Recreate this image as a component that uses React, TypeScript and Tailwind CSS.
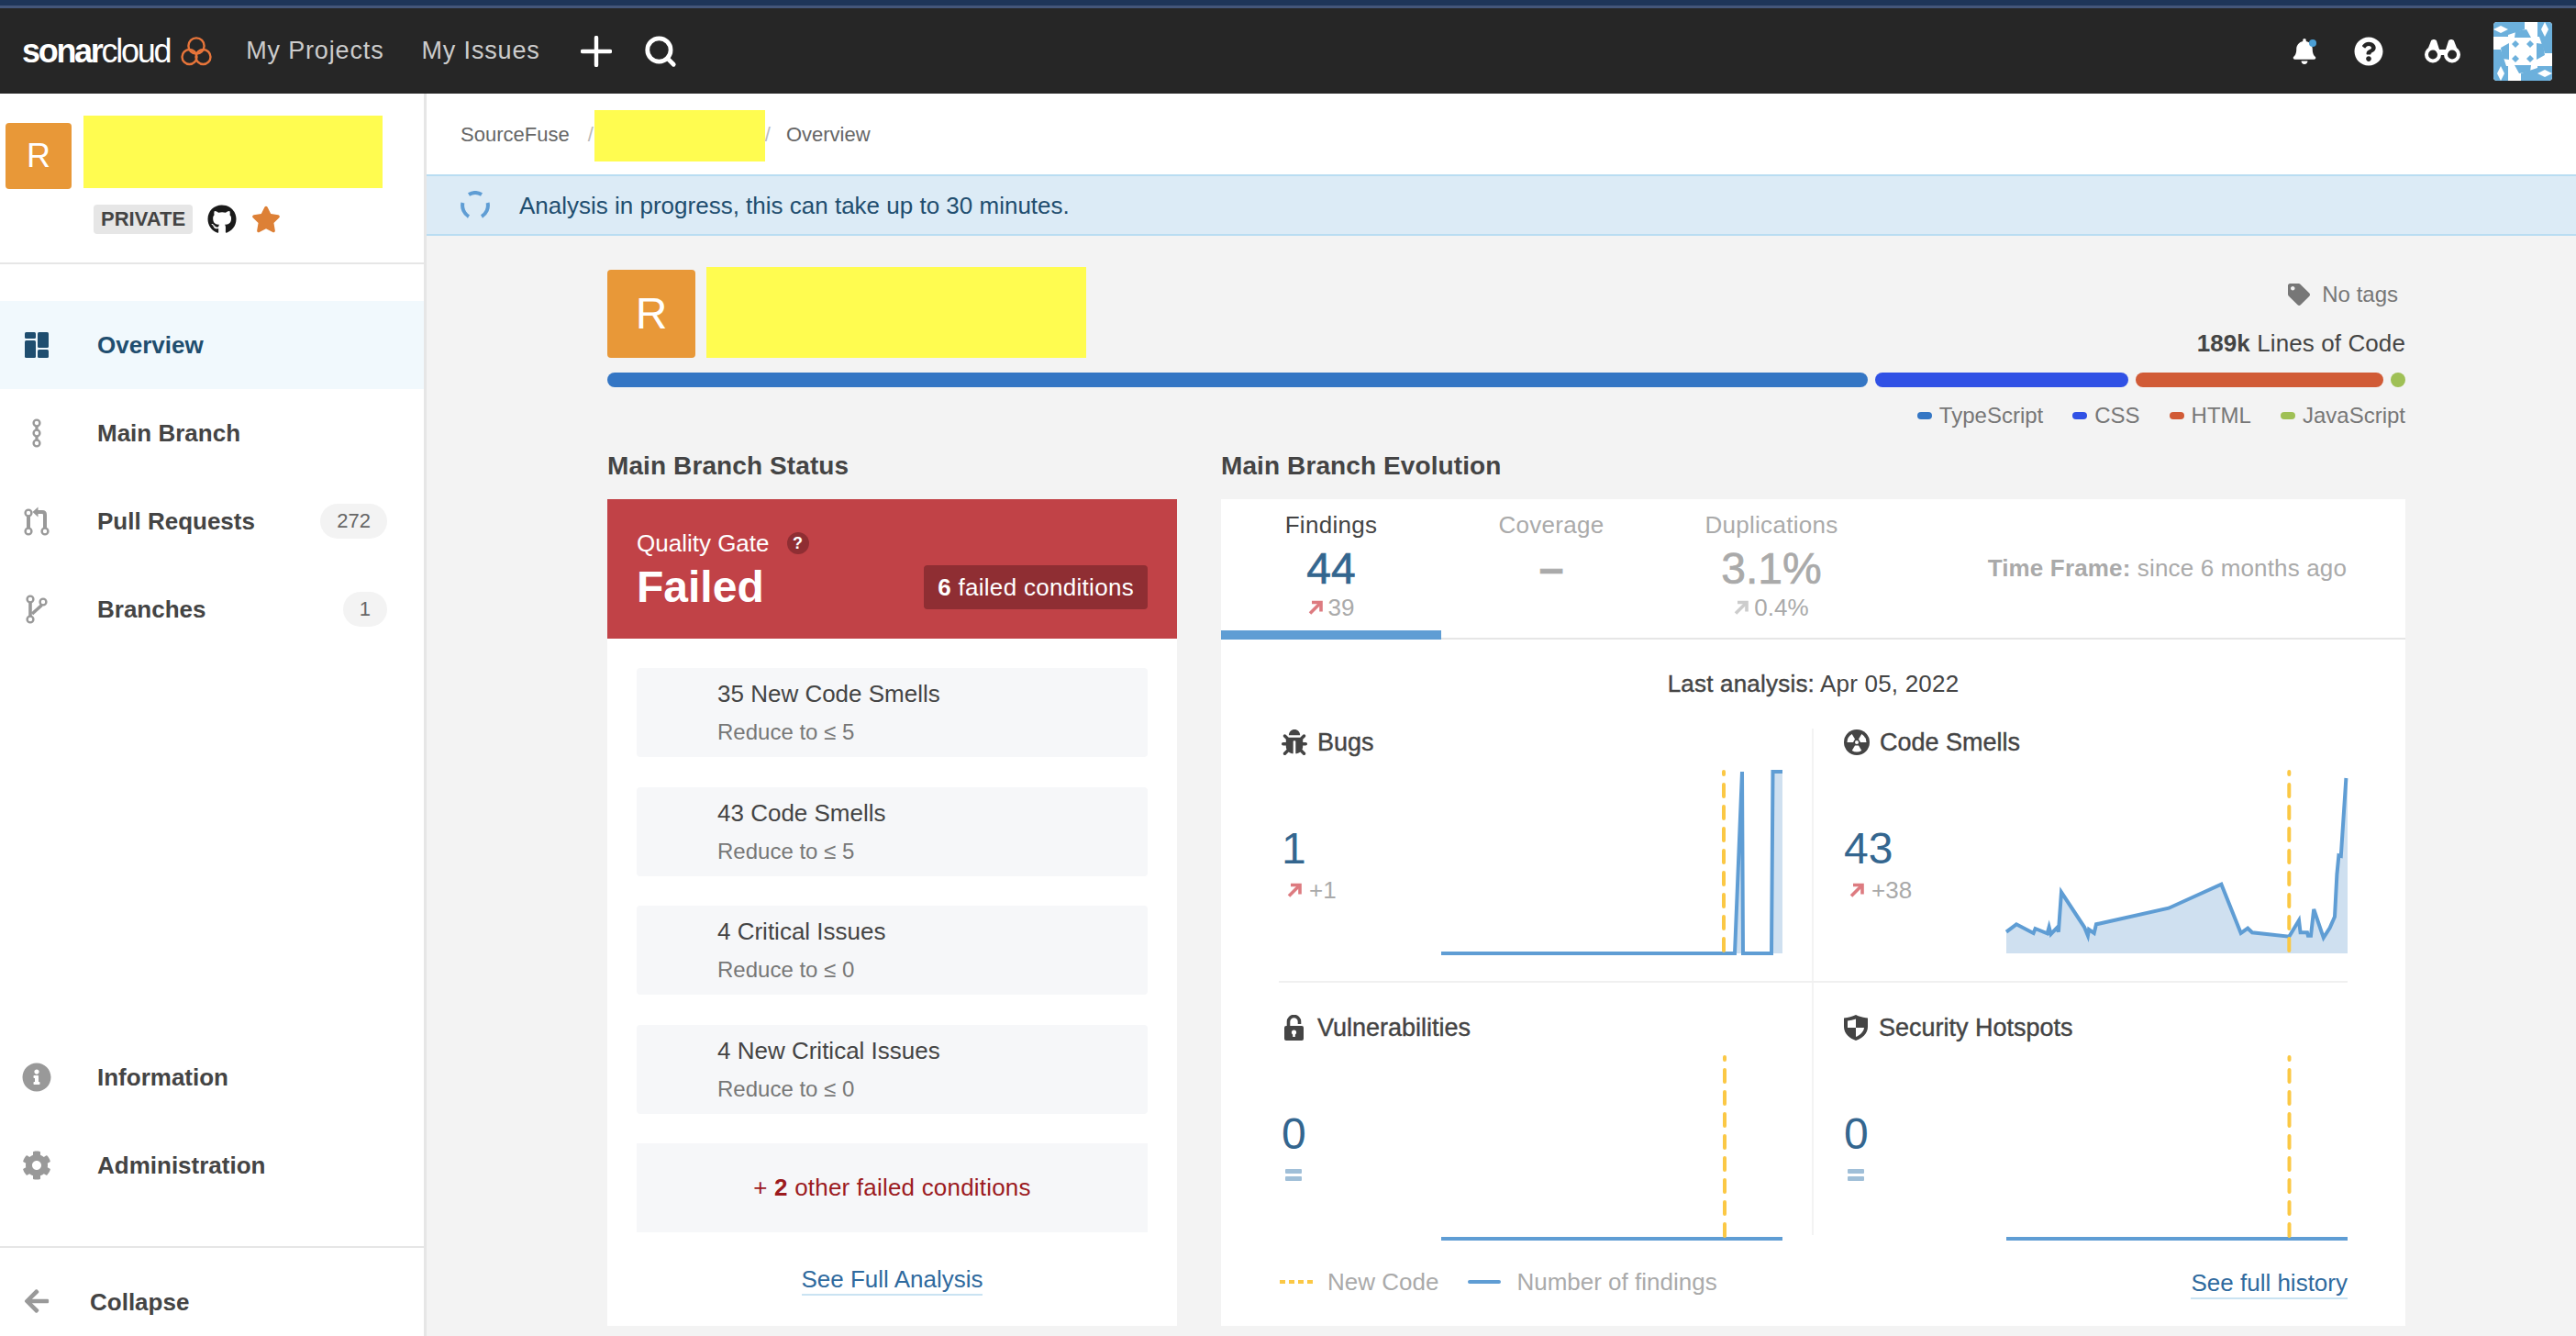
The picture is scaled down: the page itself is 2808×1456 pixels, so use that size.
import { Search } from "lucide-react";
import {
  FaArrowLeft,
  FaBell,
  FaBug,
  FaCog,
  FaGithub,
  FaInfoCircle,
  FaQuestionCircle,
  FaStar,
  FaTag,
} from "react-icons/fa";

const conditions = [
  { title: "35 New Code Smells", sub: "Reduce to ≤ 5" },
  { title: "43 Code Smells", sub: "Reduce to ≤ 5" },
  { title: "4 Critical Issues", sub: "Reduce to ≤ 0" },
  { title: "4 New Critical Issues", sub: "Reduce to ≤ 0" },
];

const smellsLine =
  "0,176.7 11,168.3 29.6,178 31.6,173 44.7,178.3 46.6,171.3 48.6,179 55.3,172 56.9,176.7 60,133.3 85,171.3 88.9,180.7 90,174 95.7,178 98,168.3 177,150.7 234.4,124.7 255.7,178 263.2,172.7 268,177.3 308.3,181.7 319,164 320.6,177.3 328,177.3 328.9,180.7 332,180.7 335.2,152 345.8,183 352.6,172.3 358,160 360.4,114 362.4,93.3 364.8,94 370.4,9";

function DashboardIcon() {
  return (
    <svg width="26" height="28" viewBox="0 0 26 28" fill="#1f4e6f">
      <rect x="0" y="0" width="12" height="7" rx="1.5" />
      <rect x="0" y="9" width="12" height="19" rx="1.5" />
      <rect x="14" y="0" width="12" height="17" rx="1.5" />
      <rect x="14" y="19" width="12" height="9" rx="1.5" />
    </svg>
  );
}

function MainBranchIcon() {
  return (
    <svg width="12" height="32" viewBox="0 0 12 32" fill="none" stroke="#999" strokeWidth="2.4">
      <circle cx="6" cy="5" r="3.4" />
      <circle cx="6" cy="16" r="3.4" />
      <circle cx="6" cy="27" r="3.4" />
      <path d="M6 8.5v4M6 19.5v4" strokeWidth="3.2" />
    </svg>
  );
}

function PullRequestIcon() {
  return (
    <svg width="28" height="32" viewBox="0 0 28 32" fill="none" stroke="#999" strokeWidth="2.4">
      <circle cx="5" cy="7" r="3.4" />
      <circle cx="5" cy="27" r="3.4" />
      <circle cx="23" cy="27" r="3.4" />
      <path d="M5 10.5v13" strokeWidth="4" />
      <path d="M23 23.5V9c0-2-1-3-3-3h-5" strokeWidth="4" />
      <path d="M15.5 0.5v11L9.5 6z" fill="#999" stroke="none" />
    </svg>
  );
}

function BranchIcon() {
  return (
    <svg width="24" height="32" viewBox="0 0 24 32" fill="none" stroke="#999" strokeWidth="2.4">
      <circle cx="5" cy="5" r="3.4" />
      <circle cx="5" cy="27" r="3.4" />
      <circle cx="19" cy="8" r="3.4" />
      <path d="M5 8.5v15" strokeWidth="3.6" />
      <path d="M17.5 11.5L7 21" strokeWidth="3.6" />
    </svg>
  );
}

function BinocularsIcon() {
  return (
    <svg width="39" height="27" viewBox="0 0 39 27" fill="none">
      <circle cx="9" cy="17.5" r="7" stroke="#fff" strokeWidth="4" />
      <circle cx="30" cy="17.5" r="7" stroke="#fff" strokeWidth="4" />
      <path d="M2.5 14L7 2.5C8 0.5 12 0.5 13 2.5L16 12H23L26 2.5C27 0.5 31 0.5 32 2.5L36.5 14L28 11L24 18H15L11 11Z" fill="#fff" />
    </svg>
  );
}

function SmellIcon() {
  const sector = (a: number) => {
    const r = (d: number) => (d * Math.PI) / 180;
    const x = (rad: number, d: number) => (14 + rad * Math.cos(r(d))).toFixed(2);
    const y = (rad: number, d: number) => (14 - rad * Math.sin(r(d))).toFixed(2);
    return `M${x(4, a - 30)} ${y(4, a - 30)}L${x(10.5, a - 30)} ${y(10.5, a - 30)}A10.5 10.5 0 0 0 ${x(10.5, a + 30)} ${y(10.5, a + 30)}L${x(4, a + 30)} ${y(4, a + 30)}Z`;
  };
  return (
    <svg width="28" height="28" viewBox="0 0 28 28">
      <circle cx="14" cy="14" r="14" fill="#444" />
      <path d={sector(30)} fill="#fff" />
      <path d={sector(150)} fill="#fff" />
      <path d={sector(270)} fill="#fff" />
      <circle cx="14" cy="14" r="2" fill="#fff" />
    </svg>
  );
}

function LockIcon() {
  return (
    <svg width="21" height="28" viewBox="0 0 21 28">
      <path d="M4.5 14V7.5a6 6 0 0 1 12 0V10" fill="none" stroke="#444" strokeWidth="3.6" />
      <rect x="0" y="12" width="21" height="16" rx="2" fill="#444" />
      <circle cx="10.5" cy="19" r="2.6" fill="#fff" />
      <rect x="9.2" y="19" width="2.6" height="5" fill="#fff" />
    </svg>
  );
}

function ShieldIcon() {
  return (
    <svg width="26" height="28" viewBox="0 0 26 28">
      <path d="M13 0C17 2 21 3 26 3.5V13C26 21 19 26 13 28C7 26 0 21 0 13V3.5C5 3 9 2 13 0Z" fill="#444" />
      <path d="M13 4.5V14H4V6.5C7 6.2 10 5.6 13 4.5Z" fill="#fff" />
      <path d="M13 14H22C21.5 18.5 17.5 22 13 24Z" fill="#fff" />
    </svg>
  );
}

function AvatarPiece() {
  return (
    <g>
      <polygon points="0,0 16,0 16,16 0,16" fill="#6cb0dc" />
      <polygon points="16,0 34,0 34,8 16,14" fill="#6cb0dc" />
      <polygon points="0,8 8,4 16,8 8,12" fill="#fff" />
      <polygon points="24,10 36,8 41,17 23,17" fill="#6cb0dc" />
      <polygon points="24,20 28,24 24,28 20,24" fill="#6cb0dc" />
    </g>
  );
}

function Avatar() {
  return (
    <svg width="64" height="64" viewBox="0 0 64 64" className="rounded-[4px]">
      <rect width="64" height="64" fill="#fff" />
      <AvatarPiece />
      <g transform="rotate(90 32 32)"><AvatarPiece /></g>
      <g transform="rotate(180 32 32)"><AvatarPiece /></g>
      <g transform="rotate(270 32 32)"><AvatarPiece /></g>
    </svg>
  );
}

function DeltaArrow({ color }: { color: string }) {
  return (
    <svg width="16" height="16" viewBox="0 0 16 16" fill="none" stroke={color} strokeWidth="3.6">
      <path d="M2 14.5L12.5 4" />
      <path d="M4 2.5h10v10" />
    </svg>
  );
}

function Chart({ line, area, marker }: { line: string; area?: string; marker: number }) {
  return (
    <svg width="372" height="202" viewBox="0 0 372 202" className="overflow-visible shrink-0">
      {area && <polygon points={area} fill="#cfe0f0" />}
      <polyline points={line} fill="none" stroke="#5f9dd4" strokeWidth="4" />
      <line
        x1={marker}
        x2={marker}
        y1="2"
        y2="198"
        stroke="#fbc845"
        strokeWidth="4"
        strokeLinecap="round"
        strokeDasharray="13 11"
        strokeDashoffset="10"
      />
    </svg>
  );
}

function ChartCell({
  icon,
  title,
  value,
  delta,
  children,
  className,
  titleGap,
}: {
  icon: React.ReactNode;
  title: string;
  value: string;
  delta?: string;
  children: React.ReactNode;
  className: string;
  titleGap: string;
}) {
  return (
    <div className={className}>
      <div className="flex items-center h-[28px] text-[27px] text-[#444] [-webkit-text-stroke:0.4px_#444]">
        <span className={`flex justify-start ${titleGap}`}>{icon}</span>
        {title}
      </div>
      <div className="flex justify-between mt-4">
        <div className="pt-[62px]">
          <div className="text-[48px] leading-[48px] text-[#34668f]">{value}</div>
          {delta ? (
            <div className="flex items-center mt-2 ml-[6px] text-[26px] leading-[26px] text-[#aaa]">
              <DeltaArrow color="#dd7b80" />
              <span className="ml-2">{delta}</span>
            </div>
          ) : (
            <div className="mt-[14px] ml-1 flex flex-col gap-[3px] w-[18px]">
              <div className="h-[5px] rounded-[1px] bg-[#a0bfd8]" />
              <div className="h-[5px] rounded-[1px] bg-[#a0bfd8]" />
            </div>
          )}
        </div>
        {children}
      </div>
    </div>
  );
}

function NavItem({
  icon,
  label,
  badge,
  active,
}: {
  icon: React.ReactNode;
  label: string;
  badge?: string;
  active?: boolean;
}) {
  return (
    <div className={`flex items-center h-[96px] pr-10 ${active ? "bg-[#f1f9fd]" : ""}`}>
      <span className="w-[80px] flex justify-center shrink-0">{icon}</span>
      <span className={`ml-[26px] flex-1 text-[26px] font-bold ${active ? "text-[#1f4e6f]" : "text-[#444]"}`}>{label}</span>
      {badge && (
        <span className="h-[38px] px-[18px] min-w-[48px] rounded-full bg-[#f3f3f3] text-[22px] leading-[38px] text-center text-[#666]">
          {badge}
        </span>
      )}
    </div>
  );
}

function Tab({
  label,
  value,
  delta,
  active,
}: {
  label: string;
  value: React.ReactNode;
  delta?: string;
  active?: boolean;
}) {
  return (
    <div className={`w-[240px] h-[153px] pt-3 flex flex-col items-center ${active ? "border-b-[10px] border-[#5f9dd4]" : ""}`}>
      <div className={`text-[26px] leading-[32px] tracking-[0.3px] ${active ? "text-[#444]" : "text-[#aaa]"}`}>{label}</div>
      <div
        className={`mt-2 text-[48px] leading-[48px] ${
          active
            ? "text-[#34668f] [-webkit-text-stroke:0.7px_#34668f]"
            : "text-[#aaa] [-webkit-text-stroke:0.7px_#aaa]"
        }`}
      >
        {value}
      </div>
      {delta && (
        <div className="mt-1 flex items-center h-[28px] text-[26px] text-[#aaa]">
          <DeltaArrow color={active ? "#dd7b80" : "#ccc"} />
          <span className="ml-[6px]">{delta}</span>
        </div>
      )}
    </div>
  );
}

export default function App() {
  return (
    <div className="w-[2808px] h-[1456px] overflow-hidden flex flex-col bg-[#f3f3f3] font-['Liberation_Sans',Arial,sans-serif]">
      <div className="h-[6px] bg-[#1e3559]" />
      <div className="h-[3px] bg-[#44567a]" />

      {/* top bar */}
      <header className="h-[93px] bg-[#262626] flex items-center text-[#ccc] shrink-0">
        <div className="ml-6 flex items-center">
          <span className="text-[36px] tracking-[-2.3px] text-white">
            <b>sonar</b>cloud
          </span>
          <svg width="34" height="32" viewBox="0 0 34 32" fill="none" stroke="#e8753a" strokeWidth="2.4" className="ml-[12px]">
            <circle cx="17" cy="10" r="8.6" />
            <circle cx="9.5" cy="22" r="8" />
            <circle cx="24.5" cy="22" r="8" />
          </svg>
        </div>
        <span className="ml-[37px] text-[27px] tracking-[0.85px]">My Projects</span>
        <span className="ml-[41px] text-[27px] tracking-[0.85px]">My Issues</span>
        <svg width="34" height="34" viewBox="0 0 34 34" stroke="#fff" strokeWidth="4.4" strokeLinecap="round" className="ml-[44px]">
          <path d="M17 2v30M2 17h30" />
        </svg>
        <Search size={38} strokeWidth={3} color="#fff" className="ml-[34px]" />
        <div className="ml-auto flex items-center mr-[26px]">
          <span className="relative">
            <FaBell size={28} color="#fff" />
            <span className="absolute right-[1px] top-[1px] w-[8px] h-[8px] rounded-full bg-[#4b9fd5]" />
          </span>
          <FaQuestionCircle size={32} color="#fff" className="ml-[40px]" />
          <span className="ml-[45px]">
            <BinocularsIcon />
          </span>
          <span className="ml-[36px]">
            <Avatar />
          </span>
        </div>
      </header>

      <div className="flex flex-1 min-h-0">
        {/* sidebar */}
        <aside className="w-[465px] shrink-0 bg-white border-r-[3px] border-[#e6e6e6] flex flex-col">
          <div className="h-[186px] border-b-2 border-[#e6e6e6] pt-6">
            <div className="flex items-start pl-[6px]">
              <div className="w-[72px] h-[72px] mt-2 rounded-[4px] bg-[#e89838] text-white text-[36px] leading-[72px] text-center">R</div>
              <div className="w-[326px] h-[79px] ml-[13px] bg-[#fffc50]" />
            </div>
            <div className="flex items-center mt-[17px] ml-[102px]">
              <span className="h-[32px] px-2 rounded-[4px] bg-[#e6e6e6] text-[22px] leading-[32px] font-bold text-[#444]">PRIVATE</span>
              <FaGithub size={32} color="#1a1a1a" className="ml-4" />
              <FaStar size={32} color="#dd8036" className="ml-4" />
            </div>
          </div>
          <nav className="mt-10">
            <NavItem icon={<DashboardIcon />} label="Overview" active />
            <NavItem icon={<MainBranchIcon />} label="Main Branch" />
            <NavItem icon={<PullRequestIcon />} label="Pull Requests" badge="272" />
            <NavItem icon={<BranchIcon />} label="Branches" badge="1" />
          </nav>
          <div className="mt-auto">
            <NavItem icon={<FaInfoCircle size={32} color="#999" />} label="Information" />
            <NavItem icon={<FaCog size={32} color="#999" />} label="Administration" />
            <div className="mt-10 border-t-2 border-[#e6e6e6] h-[98px] pt-[43px] flex items-start">
              <span className="w-[80px] flex justify-center">
                <FaArrowLeft size={30} color="#999" />
              </span>
              <span className="ml-[18px] text-[26px] leading-[32px] font-bold text-[#444]">Collapse</span>
            </div>
          </div>
        </aside>

        <main className="flex-1 min-w-0 flex flex-col">
          {/* breadcrumb */}
          <div className="h-[88px] bg-white flex items-center pl-[37px] text-[22px] text-[#666] shrink-0">
            <span>SourceFuse</span>
            <span className="ml-[20px] text-[#bbb]">/</span>
            <div className="w-[186px] h-[56px] ml-[1px] mt-1 bg-[#fffc50]" />
            <span className="text-[#bbb]">/</span>
            <span className="ml-[17px]">Overview</span>
          </div>

          {/* analysis banner */}
          <div className="h-[67px] shrink-0 bg-[#dcebf6] border-y-2 border-[#b9ddf2] flex items-center pl-[37px]">
            <svg width="32" height="32" viewBox="0 0 32 32" fill="none" stroke="#5f9dd4" strokeWidth="4">
              <path d="M9 4a14 14 0 0 1 14 0" />
              <path d="M2.4 13a14 14 0 0 0 6.6 15" />
              <path d="M29.6 13a14 14 0 0 1-6.6 15" />
            </svg>
            <span className="ml-8 mt-px text-[26px] text-[#1f4e6f]">Analysis in progress, this can take up to 30 minutes.</span>
          </div>

          <div className="ml-[197px] w-[1960px] pt-[34px]">
            {/* project header */}
            <div className="flex justify-between h-[99px]">
              <div className="flex items-start">
                <div className="w-[96px] h-[96px] mt-[3px] rounded-[4px] bg-[#e89838] text-white text-[48px] leading-[96px] text-center">R</div>
                <div className="w-[414px] h-[99px] ml-3 bg-[#fffc50]" />
              </div>
              <div className="flex flex-col items-end pt-4">
                <div className="flex items-center h-[28px] pr-2 text-[24px] text-[#777]">
                  <FaTag size={24} color="#777" />
                  <span className="ml-[13px]">No tags</span>
                </div>
                <div className="mt-[23px] text-[26px] leading-[32px] tracking-[0.1px] text-[#444]">
                  <b>189k</b> Lines of Code
                </div>
              </div>
            </div>

            {/* languages */}
            <div className="mt-4 flex gap-2 h-[16px]">
              <div className="flex-1 rounded-full bg-[#3476c4]" />
              <div className="w-[276px] rounded-full bg-[#3051e5]" />
              <div className="w-[270px] rounded-full bg-[#d15b36]" />
              <div className="w-[16px] rounded-full bg-[#9fc055]" />
            </div>
            <div className="mt-[17px] flex justify-end gap-[32px] h-[28px] text-[24px] leading-[28px] text-[#777]">
              <span className="flex items-center"><i className="w-4 h-[8px] rounded-full bg-[#3476c4] mr-2" />TypeScript</span>
              <span className="flex items-center"><i className="w-4 h-[8px] rounded-full bg-[#3051e5] mr-2" />CSS</span>
              <span className="flex items-center"><i className="w-4 h-[8px] rounded-full bg-[#d15b36] mr-2" />HTML</span>
              <span className="flex items-center"><i className="w-4 h-[8px] rounded-full bg-[#9fc055] mr-2" />JavaScript</span>
            </div>

            <div className="mt-[25px] flex gap-[48px]">
              {/* status column */}
              <section className="w-[621px] shrink-0">
                <h2 className="text-[28px] leading-[32px] font-bold text-[#444] tracking-[0.1px]">Main Branch Status</h2>
                <div className="mt-5 h-[901px] bg-white">
                  <div className="h-[152px] bg-[#c14247] text-white px-8 pt-[32px] relative">
                    <div className="flex items-center text-[26px] leading-[32px]">
                      Quality Gate
                      <span className="ml-[19px] w-[24px] h-[24px] rounded-full bg-[#8f2e33] text-[18px] leading-[24px] font-bold text-center">?</span>
                    </div>
                    <div className="mt-[6px] text-[48px] leading-[52px] font-bold">Failed</div>
                    <div className="absolute right-8 top-[72px] h-[48px] px-[15px] rounded-[4px] bg-[#8f2e33] text-[26px] leading-[48px] tracking-[0.3px]">
                      <b>6</b> failed conditions
                    </div>
                  </div>
                  <div className="px-8 pt-8 flex flex-col gap-[32.5px]">
                    {conditions.map((c) => (
                      <div key={c.title} className="h-[97px] rounded-[4px] bg-[#f6f7f9] pl-[88px] pt-3">
                        <div className="text-[26px] leading-[32px] text-[#444]">{c.title}</div>
                        <div className="mt-3 text-[24px] leading-[28px] text-[#777]">{c.sub}</div>
                      </div>
                    ))}
                    <div className="h-[97px] bg-[#f6f7f9] flex items-center justify-center text-[26px] tracking-[0.2px] text-[#9c1b1f]">
                      <span>+ <b>2</b> other failed conditions</span>
                    </div>
                  </div>
                  <div className="mt-[35px] flex justify-center">
                    <span className="h-[34px] border-b-2 border-[#cae3f2] text-[26px] leading-[32px] text-[#2f6a9e]">See Full Analysis</span>
                  </div>
                </div>
              </section>

              {/* evolution column */}
              <section className="flex-1 min-w-0">
                <h2 className="text-[28px] leading-[32px] font-bold text-[#444] tracking-[0.1px]">Main Branch Evolution</h2>
                <div className="mt-5 h-[901px] bg-white">
                  <div className="h-[153px] border-b-2 border-[#e6e6e6] flex items-start">
                    <Tab label="Findings" value="44" delta="39" active />
                    <Tab label="Coverage" value={<b>–</b>} />
                    <Tab label="Duplications" value="3.1%" delta="0.4%" />
                    <div className="ml-auto mr-[64px] mt-[59px] text-[26px] leading-[32px] tracking-[0.15px] text-[#aaa]">
                      <b>Time Frame:</b> since 6 months ago
                    </div>
                  </div>
                  <div className="mt-[32px] text-center text-[26px] leading-[32px] tracking-[0.2px] text-[#444]">
                    <span className="[-webkit-text-stroke:0.4px_#444]">Last analysis:</span> Apr 05, 2022
                  </div>
                  <div className="mx-[63px] mt-[33px]">
                    <div className="flex h-[277px] border-b-2 border-[#f0f0f0]">
                      <ChartCell
                        icon={<FaBug size={28} color="#444" />}
                        title="Bugs"
                        value="1"
                        delta="+1"
                        titleGap="w-[39px]"
                        className="w-[583px] pr-[32px] pl-[3px] pt-px border-r-2 border-[#f3f3f3]"
                      >
                        <Chart
                          line="0,200 320,200 328,2 329,200 360,200 361.5,2 372,2"
                          area="320,200 328,2 329,200 360,200 361.5,2 372,2 372,200"
                          marker={308}
                        />
                      </ChartCell>
                      <ChartCell
                        icon={<SmellIcon />}
                        title="Code Smells"
                        value="43"
                        delta="+38"
                        titleGap="w-[39px]"
                        className="flex-1 pl-[33px] pt-px"
                      >
                        <Chart line={smellsLine} area={`0,200 ${smellsLine} 372,9 372,200`} marker={308.3} />
                      </ChartCell>
                    </div>
                    <div className="flex h-[275px]">
                      <ChartCell
                        icon={<LockIcon />}
                        title="Vulnerabilities"
                        value="0"
                        titleGap="w-[36px] ml-[3px]"
                        className="w-[583px] pr-[32px] pl-[3px] pt-[35px] border-r-2 border-[#f3f3f3]"
                      >
                        <Chart line="0,200 372,200" marker={309} />
                      </ChartCell>
                      <ChartCell
                        icon={<ShieldIcon />}
                        title="Security Hotspots"
                        value="0"
                        titleGap="w-[38px]"
                        className="flex-1 pl-[33px] pt-[35px]"
                      >
                        <Chart line="0,200 372,200" marker={308.5} />
                      </ChartCell>
                    </div>
                    <div className="mt-[36px] flex items-center h-[30px] text-[26px] text-[#aaa]">
                      <svg width="36" height="4" viewBox="0 0 36 4" stroke="#fbc845" strokeWidth="4" strokeDasharray="6 4" className="ml-px">
                        <path d="M0 2h36" />
                      </svg>
                      <span className="ml-4">New Code</span>
                      <span className="ml-8 w-[36px] h-[4px] rounded-full bg-[#5f9dd4]" />
                      <span className="ml-[17px]">Number of findings</span>
                      <span className="ml-auto h-[34px] mt-[3px] border-b-2 border-[#cae3f2] leading-[32px] text-[#2f6a9e]">See full history</span>
                    </div>
                  </div>
                </div>
              </section>
            </div>
          </div>
        </main>
      </div>
    </div>
  );
}
